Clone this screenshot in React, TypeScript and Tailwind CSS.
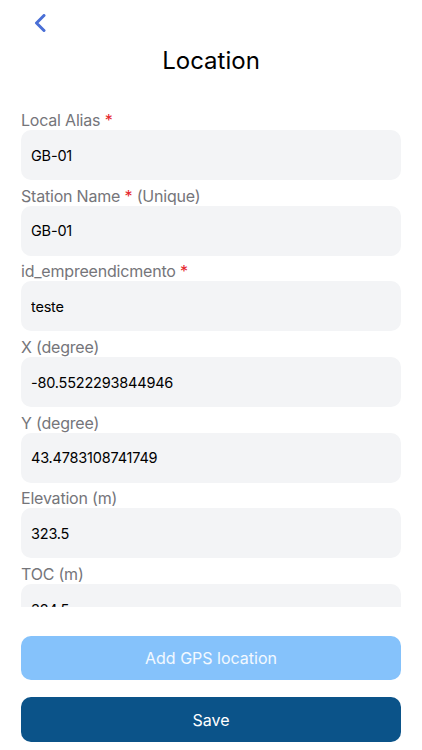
import React from 'react';

const FIELDS = [
  { label: 'Local Alias', required: true, value: 'GB-01' },
  { label: 'Station Name', required: true, suffix: '(Unique)', value: 'GB-01' },
  { label: 'id_empreendicmento', required: true, value: 'teste' },
  { label: 'X (degree)', value: '-80.5522293844946' },
  { label: 'Y (degree)', value: '43.4783108741749' },
  { label: 'Elevation (m)', value: '323.5' },
  { label: 'TOC (m)', value: '324.5' },
];

export default function App() {
  return (
    <div
      className="w-[422px] h-[750px] bg-white flex flex-col overflow-hidden"
      style={{ fontFamily: 'Inter, "Noto Sans", sans-serif' }}
    >
      <div className="h-[46px] flex items-center px-[31px] flex-shrink-0">
        <button className="w-[18px] h-[22px] flex items-center justify-center">
          <svg width="14" height="18" viewBox="0 0 14 18" fill="none">
            <path d="M11 1.5 L3.5 9 L11 16.5" stroke="#4a6fd6" strokeWidth="3" strokeLinecap="round" strokeLinejoin="round" />
          </svg>
        </button>
      </div>
      <h1 className="text-center text-[24px] leading-[29px] text-black font-normal flex-shrink-0">Location</h1>

      <div className="h-[496px] overflow-hidden mt-[36px] px-[21px] flex flex-col gap-[6.7px] flex-shrink-0">
        {FIELDS.map((field) => (
          <div key={field.label} className="flex flex-col">
            <label className="text-[16px] leading-[19px] tracking-[-0.2px] text-[#75757a]">
              {field.label}
              {field.required && <span className="text-[#e5242b]"> *</span>}
              {field.suffix && <span> {field.suffix}</span>}
            </label>
            <input
              readOnly
              value={field.value}
              className="h-[50px] w-full rounded-[10px] bg-[#f3f4f6] px-[10px] text-[14.5px] tracking-[-0.2px] text-black outline-none"
            />
          </div>
        ))}
      </div>

      <div className="px-[21px] mt-[29px] flex flex-col gap-[17px]">
        <button className="h-[44px] rounded-[10px] bg-[#85c2fb] text-[16px] text-white/90">
          Add GPS location
        </button>
        <button className="h-[45px] rounded-[10px] bg-[#0b5389] text-[16px] text-white">
          Save
        </button>
      </div>
    </div>
  );
}
